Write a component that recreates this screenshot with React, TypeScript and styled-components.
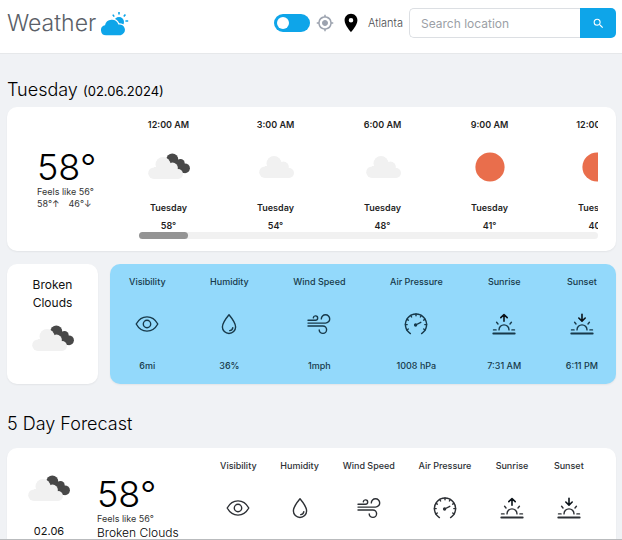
import React, { useState } from "react";
import styled, { createGlobalStyle } from "styled-components";
import { MdLocationOn, MdMyLocation, MdSearch } from "react-icons/md";

const GlobalStyle = createGlobalStyle`
  *, *::before, *::after { box-sizing: border-box; }
  body { margin: 0; background: #f0f2f5; }
  body, button, input { font-family: Inter, "Liberation Sans", sans-serif; }
  h1, h2, p, dl, dt, dd, ul { margin: 0; padding: 0; }
`;

const Page = styled.div`
  display: flex;
  flex-direction: column;
  height: 100vh;
  color: #111;
  border-bottom: 1px solid #b9bbbd;
`;

const Header = styled.header`
  display: flex;
  flex: none;
  align-items: center;
  justify-content: space-between;
  padding: 8px 6px 15px 7px;
  background: #fff;
  border-bottom: 1px solid #e6e8ea;
`;

const Brand = styled.h1`
  display: flex;
  align-items: center;
  gap: 5px;
  font-size: 23px;
  line-height: 30px;
  font-weight: 300;
  color: #5b5f68;
`;

const Tools = styled.div`
  display: flex;
  align-items: center;
`;

const Switch = styled.input`
  appearance: none;
  display: flex;
  align-items: center;
  width: 36px;
  height: 18px;
  margin: 0 6px 0 0;
  padding: 3px;
  border-radius: 9px;
  background: #0ea5e9;
  cursor: pointer;

  &::before {
    content: "";
    width: 12px;
    height: 12px;
    border-radius: 50%;
    background: #fff;
  }
  &:checked { justify-content: flex-end; }
`;

const IconButton = styled.button<{ $color: string }>`
  display: flex;
  padding: 0;
  border: 0;
  background: none;
  color: ${(p) => p.$color};
  cursor: pointer;
`;

const Place = styled.span`
  display: flex;
  align-items: center;
  gap: 6px;
  margin: 0 6px;
  font-size: 11px;
  font-weight: 300;
  color: #4a4c50;

  svg { color: #000; }
`;

const Search = styled.form`
  display: flex;
  height: 30px;
`;

const SearchInput = styled.input`
  width: 171px;
  padding: 0 11px;
  border: 1px solid #dcdfe3;
  border-right: 0;
  border-radius: 5px 0 0 5px;
  font-size: 12px;
  background: #fff;
  outline: none;

  &::placeholder { color: #9b9fa6; }
`;

const SearchButton = styled.button`
  display: flex;
  align-items: center;
  justify-content: center;
  width: 36px;
  padding: 0;
  border: 0;
  border-radius: 0 5px 5px 0;
  background: #0ea5e9;
  color: #fff;
  cursor: pointer;
`;

const Main = styled.main`
  flex: 1;
  min-height: 0;
  overflow-y: auto;
  scrollbar-width: none;
  padding: 24px 6px 24px 7px;
`;

const Title = styled.h2`
  font-size: 18px;
  line-height: 24px;
  font-weight: 300;
  color: #000;

  small {
    font-size: 13px;
    font-weight: 400;
  }
`;

const Card = styled.section`
  display: flex;
  background: #fff;
  border-radius: 10px;
  box-shadow: 0 1px 2px rgba(0, 0, 0, 0.06);
`;

const TodayCard = styled(Card)`
  align-items: center;
  margin-top: 4px;
  padding: 11px 18px 12px 30px;
`;

const Temperature = styled.div`
  flex: none;
  display: flex;
  flex-direction: column;
`;

const TodayTemperature = styled(Temperature)`
  width: 102px;
`;

const Degrees = styled.span`
  font-size: 36px;
  line-height: 38px;
  font-weight: 300;
  color: #000;
`;

const Note = styled.span`
  display: flex;
  gap: 9px;
  font-size: 9px;
  line-height: 12px;
  color: #333;
`;

const Hourly = styled.div`
  flex: 1;
  min-width: 0;
`;

const Hours = styled.ul`
  display: flex;
  gap: 48px;
  overflow-x: auto;
  scrollbar-width: none;
  list-style: none;
`;

const Hour = styled.li`
  flex: none;
  display: flex;
  flex-direction: column;
  align-items: center;
  width: 59px;
  font-size: 9px;
  line-height: 14px;
  font-weight: 600;
  color: #1f1f1f;
`;

const HourIcon = styled.span`
  display: flex;
  margin: 13px 0 12px;
`;

const HourTemp = styled.span`
  margin-top: 4px;
  line-height: 13px;
`;

const Track = styled.div`
  height: 7px;
  border-radius: 4px;
  background: #f1f1f1;
`;

const Thumb = styled.div`
  width: 49px;
  height: 7px;
  border-radius: 4px;
  background: #949494;
`;

const Row = styled.div`
  display: flex;
  gap: 12px;
  margin: 13px 0 28px;
`;

const SummaryCard = styled(Card)`
  flex: none;
  flex-direction: column;
  align-items: center;
  gap: 5px;
  width: 91px;
  padding: 12px 16px 11px;
  font-size: 12px;
  line-height: 18px;
  text-align: center;
`;

const DetailsCard = styled(Card)`
  flex: 1;
  padding: 11px 18px 11px 19px;
  background: #93d9fb;
`;

const DetailList = styled.dl<{ $ink: string }>`
  display: flex;
  flex: 1;
  justify-content: space-between;
  color: ${(p) => p.$ink};
`;

const DetailItem = styled.div`
  display: flex;
  flex-direction: column;
  align-items: center;
  justify-content: space-between;
  height: 98px;
  font-size: 9px;
  line-height: 14px;
  font-weight: 500;
  white-space: nowrap;
`;

const Label = styled.dt`
  display: flex;
  flex-direction: column;
  align-items: center;
  gap: 23px;
`;

const ForecastCard = styled(Card)`
  margin-top: 12px;
  padding: 11px 31px 11px 20px;
`;

const Day = styled.div`
  display: flex;
  flex-direction: column;
  align-items: center;
  gap: 13px;
  padding-top: 8px;
  font-size: 11px;
  line-height: 14px;
`;

const DayTemperature = styled(Temperature)`
  width: 123px;
  margin: 16px 0 0 26px;
`;

const Condition = styled.span`
  font-size: 12px;
  line-height: 16px;
  font-weight: 300;
  color: #000;
`;

type Sky = "broken" | "cloud" | "sun";

function SkyIcon({ sky }: { sky: Sky }) {
  return (
    <svg width="44" height="44" viewBox="0 0 44 44" aria-hidden="true">
      {sky === "sun" && <circle cx="22" cy="22" r="14.6" fill="#e96e4c" />}
      {sky === "broken" && (
        <g fill="#484848">
          <circle cx="25.3" cy="14.5" r="6" />
          <circle cx="33.5" cy="18.3" r="4.2" />
          <circle cx="38" cy="23.3" r="4.9" />
          <path d="M22 14h7l9 14h-10z" />
        </g>
      )}
      {sky !== "sun" && (
        <g transform={sky === "broken" ? "translate(-4 1)" : undefined} fill="#f1f1f1">
          <circle cx="11" cy="27.2" r="5.8" />
          <circle cx="20" cy="18.5" r="7.5" />
          <circle cx="29.5" cy="22" r="5.4" />
          <circle cx="35" cy="28" r="5" />
          <path d="M11 21h20l4 7v5H11z" />
        </g>
      )}
    </svg>
  );
}

function BrandIcon() {
  return (
    <svg width="28" height="26" viewBox="0 0 28 26" fill="#0ea5e9" aria-hidden="true">
      <circle cx="18" cy="12" r="5" />
      <path
        d="M11.8 4.6l1.4 2M18 2v2.6M24.4 4.6l-1.6 2M24.4 11h2.8"
        stroke="#0ea5e9"
        strokeWidth="1.6"
      />
      <path
        d="M5 25.2a5 5 0 0 1-1-9.9a6.9 6.9 0 0 1 13.4-.7a5.4 5.4 0 1 1 2.2 10.6z"
        stroke="#fff"
        strokeWidth="2.4"
        paintOrder="stroke"
      />
    </svg>
  );
}

const Glyph = styled.svg.attrs({
  width: 24,
  height: 24,
  viewBox: "0 0 24 24",
  "aria-hidden": true,
})`
  fill: none;
  stroke: currentColor;
  stroke-width: 1.4;
  stroke-linecap: round;
  stroke-linejoin: round;
`;

const EyeGlyph = () => (
  <Glyph>
    <path d="M1.2 12C3.8 7.3 7.8 4.9 12 4.9S20.2 7.3 22.8 12C20.2 16.7 16.2 19.1 12 19.1S3.8 16.7 1.2 12z" />
    <circle cx="12" cy="12" r="3.7" />
  </Glyph>
);

const DropGlyph = () => (
  <Glyph>
    <path d="M12 2.7C9.5 5.7 5.4 10.8 5.4 14.9a6.6 6.6 0 0 0 13.2 0C18.6 10.8 14.5 5.7 12 2.7z" />
    <path d="M15.8 15.6a3.4 3.4 0 0 1-3.1 3" />
  </Glyph>
);

const WindGlyph = () => (
  <Glyph>
    <path d="M1 8.3h7.5a2.2 2.2 0 1 0-2.2-2.5" />
    <path d="M1 11.1h17.5a4.2 4.2 0 1 0-4.2-4.2" />
    <path d="M1 14h14.9a3.7 3.7 0 1 1-3.7 3.9" />
  </Glyph>
);

const GaugeGlyph = () => (
  <Glyph>
    <path d="M6.4 21.6a10.6 10.6 0 1 1 11.2 0" />
    {[-120, -90, -60, -30, 0, 30, 60, 90, 120].map((angle) => (
      <path key={angle} d="M12 2v1.8" transform={`rotate(${angle} 12 12.6)`} />
    ))}
    <path d="M11.6 13l5.2-2.7" />
    <circle cx="11.6" cy="13" r="1" fill="currentColor" />
  </Glyph>
);

const Horizon = () => (
  <>
    <path d="M7 17.9a5 5 0 0 1 10 0M1.5 17.9h2.6M19.9 17.9h2.6M4.6 10.3l1.4 1.7M19.4 10.3L18 12" />
    <path d="M1.3 21.5h21.4" strokeWidth="1.9" />
  </>
);

const SunriseGlyph = () => (
  <Glyph>
    <Horizon />
    <path d="M12 9.3V2.6M8.8 5.6L12 2.5l3.2 3.1" stroke="#0b1319" strokeWidth="1.6" />
  </Glyph>
);

const SunsetGlyph = () => (
  <Glyph>
    <Horizon />
    <path d="M12 2.2V9M8.8 6L12 9.1 15.2 6" stroke="#0b1319" strokeWidth="1.6" />
  </Glyph>
);

const hours: { time: string; sky: Sky; temp: string }[] = [
  { time: "12:00 AM", sky: "broken", temp: "58°" },
  { time: "3:00 AM", sky: "cloud", temp: "54°" },
  { time: "6:00 AM", sky: "cloud", temp: "48°" },
  { time: "9:00 AM", sky: "sun", temp: "41°" },
  { time: "12:00 PM", sky: "sun", temp: "40°" },
];

const details = [
  { label: "Visibility", Icon: EyeGlyph, value: "6mi" },
  { label: "Humidity", Icon: DropGlyph, value: "36%" },
  { label: "Wind Speed", Icon: WindGlyph, value: "1mph" },
  { label: "Air Pressure", Icon: GaugeGlyph, value: "1008 hPa" },
  { label: "Sunrise", Icon: SunriseGlyph, value: "7:31 AM" },
  { label: "Sunset", Icon: SunsetGlyph, value: "6:11 PM" },
];

function Details({ ink }: { ink: string }) {
  return (
    <DetailList $ink={ink}>
      {details.map(({ label, Icon, value }) => (
        <DetailItem key={label}>
          <Label>
            {label}
            <Icon />
          </Label>
          <dd>{value}</dd>
        </DetailItem>
      ))}
    </DetailList>
  );
}

export default function App() {
  const [progress, setProgress] = useState(0);

  const onScroll = (e: React.UIEvent<HTMLUListElement>) => {
    const el = e.currentTarget;
    const range = el.scrollWidth - el.clientWidth;
    setProgress(range > 0 ? el.scrollLeft / range : 0);
  };

  return (
    <>
      <GlobalStyle />
      <Page>
        <Header>
          <Brand>
            Weather
            <BrandIcon />
          </Brand>
          <Tools>
            <Switch type="checkbox" role="switch" aria-label="Metric units" />
            <IconButton type="button" $color="#9ca3af" aria-label="Use my location">
              <MdMyLocation size={18} />
            </IconButton>
            <Place>
              <MdLocationOn size={22} aria-hidden="true" />
              Atlanta
            </Place>
            <Search onSubmit={(e) => e.preventDefault()}>
              <SearchInput type="text" placeholder="Search location" aria-label="Search location" />
              <SearchButton type="submit" aria-label="Search">
                <MdSearch size={13} />
              </SearchButton>
            </Search>
          </Tools>
        </Header>
        <Main>
          <Title>
            Tuesday <small>(02.06.2024)</small>
          </Title>
          <TodayCard>
            <TodayTemperature>
              <Degrees>58°</Degrees>
              <Note>Feels like 56°</Note>
              <Note>
                <span>58°↑</span>
                <span>46°↓</span>
              </Note>
            </TodayTemperature>
            <Hourly>
              <Hours onScroll={onScroll}>
                {hours.map((h) => (
                  <Hour key={h.time}>
                    <span>{h.time}</span>
                    <HourIcon>
                      <SkyIcon sky={h.sky} />
                    </HourIcon>
                    <span>Tuesday</span>
                    <HourTemp>{h.temp}</HourTemp>
                  </Hour>
                ))}
              </Hours>
              <Track>
                <Thumb style={{ marginLeft: `calc((100% - 49px) * ${progress})` }} />
              </Track>
            </Hourly>
          </TodayCard>
          <Row>
            <SummaryCard>
              <p>Broken Clouds</p>
              <SkyIcon sky="broken" />
            </SummaryCard>
            <DetailsCard>
              <Details ink="#17394a" />
            </DetailsCard>
          </Row>
          <Title>5 Day Forecast</Title>
          <ForecastCard>
            <Day>
              <SkyIcon sky="broken" />
              02.06
            </Day>
            <DayTemperature>
              <Degrees>58°</Degrees>
              <Note>Feels like 56°</Note>
              <Condition>Broken Clouds</Condition>
            </DayTemperature>
            <Details ink="#2d3035" />
          </ForecastCard>
        </Main>
      </Page>
    </>
  );
}
